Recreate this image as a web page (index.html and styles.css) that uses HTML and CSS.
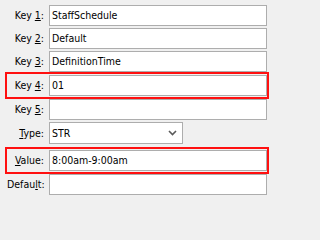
FILE: index.html
```html
<!DOCTYPE html>
<html>
<head>
<meta charset="utf-8">
<link rel="stylesheet" href="styles.css">
</head>
<body>
<div class="form">
  <div class="row"><label class="lbl">Key <u>1</u>:</label><div class="field">StaffSchedule</div></div>
  <div class="row"><label class="lbl">Key <u>2</u>:</label><div class="field">Default</div></div>
  <div class="row"><label class="lbl">Key <u>3</u>:</label><div class="field">DefinitionTime</div></div>
  <div class="row hl"><label class="lbl">Key <u>4</u>:</label><div class="field">01</div></div>
  <div class="row"><label class="lbl">Key <u>5</u>:</label><div class="field"></div></div>
  <div class="row"><label class="lbl"><u>T</u>ype:</label><div class="field select"><span>STR</span><svg class="chev" width="9" height="6" viewBox="0 0 9 6"><path d="M1 1 L4.5 4.5 L8 1" fill="none" stroke="#5a5a5a" stroke-width="1.6"/></svg></div></div>
  <div class="row hl value"><label class="lbl"><u>V</u>alue:</label><div class="field">8:00am-9:00am</div></div>
  <div class="row"><label class="lbl">Defau<u>l</u>t:</label><div class="field"></div></div>
</div>
</body>
</html>
```
FILE: styles.css
```css
html, body {
  margin: 0;
  padding: 0;
  background: #f0f0f0;
}
body {
  width: 271px;
  height: 202px;
  overflow: hidden;
  font-family: "DejaVu Sans Condensed", "DejaVu Sans", sans-serif;
  font-stretch: condensed;
  font-size: 10.5px;
  color: #000;
}
.form {
  padding: 5px 2px 0 5px;
  display: flex;
  flex-direction: column;
}
.row {
  display: grid;
  grid-template-columns: 37px 218px;
  column-gap: 5px;
  align-items: center;
  padding: 0 2px;
}
.row + .row {
  margin-top: 2px;
}
.row.hl, .row.hl + .row {
  margin-top: 0;
}
.row.hl.value {
  margin-top: 3px;
}
.hl {
  border: 2px solid #ff1010;
  padding: 1px 0;
}
.lbl {
  text-align: right;
  white-space: nowrap;
  line-height: 13px;
}
.lbl u {
  text-underline-offset: 1px;
}
.field {
  box-sizing: border-box;
  height: 21px;
  border: 1px solid #adadad;
  background: #fff;
  padding: 0 2px;
  line-height: 19px;
  white-space: nowrap;
}
.select {
  width: 134px;
  height: 22px;
  line-height: 20px;
  display: flex;
  align-items: center;
  justify-content: space-between;
  padding-right: 5px;
}
.chev {
  display: block;
}
```
